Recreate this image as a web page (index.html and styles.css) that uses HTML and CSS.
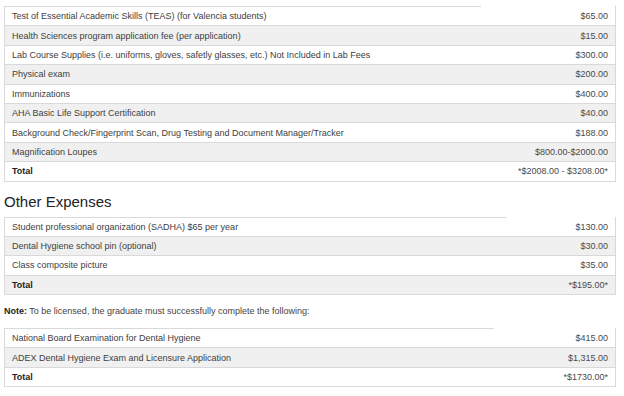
FILE: index.html
```html
<!DOCTYPE html>
<html>
<head>
<meta charset="utf-8">
<link rel="stylesheet" href="styles.css">
</head>
<body>
<div class="page">
  <div class="tbl t1">
    <div class="row first"><span class="desc">Test of Essential Academic Skills (TEAS) (for Valencia students)</span><span class="amt">$65.00</span></div>
    <div class="row"><span class="desc">Health Sciences program application fee (per application)</span><span class="amt">$15.00</span></div>
    <div class="row"><span class="desc">Lab Course Supplies (i.e. uniforms, gloves, safetly glasses, etc.) Not Included in Lab Fees</span><span class="amt">$300.00</span></div>
    <div class="row"><span class="desc">Physical exam</span><span class="amt">$200.00</span></div>
    <div class="row"><span class="desc">Immunizations</span><span class="amt">$400.00</span></div>
    <div class="row"><span class="desc">AHA Basic Life Support Certification</span><span class="amt">$40.00</span></div>
    <div class="row"><span class="desc">Background Check/Fingerprint Scan, Drug Testing and Document Manager/Tracker</span><span class="amt">$188.00</span></div>
    <div class="row"><span class="desc">Magnification Loupes</span><span class="amt">$800.00-$2000.00</span></div>
    <div class="row total"><span class="desc">Total</span><span class="amt">*$2008.00 - $3208.00*</span></div>
  </div>

  <h2 class="heading">Other Expenses</h2>

  <div class="tbl t2">
    <div class="row first"><span class="desc">Student professional organization (SADHA) $65 per year</span><span class="amt">$130.00</span></div>
    <div class="row"><span class="desc">Dental Hygiene school pin (optional)</span><span class="amt">$30.00</span></div>
    <div class="row"><span class="desc">Class composite picture</span><span class="amt">$35.00</span></div>
    <div class="row total"><span class="desc">Total</span><span class="amt">*$195.00*</span></div>
  </div>

  <p class="note"><b>Note:</b> To be licensed, the graduate must successfully complete the following:</p>

  <div class="tbl t3">
    <div class="row first"><span class="desc">National Board Examination for Dental Hygiene</span><span class="amt">$415.00</span></div>
    <div class="row"><span class="desc">ADEX Dental Hygiene Exam and Licensure Application</span><span class="amt">$1,315.00</span></div>
    <div class="row total"><span class="desc">Total</span><span class="amt">*$1730.00*</span></div>
  </div>
</div>
</body>
</html>
```
FILE: styles.css
```css
html, body {
  margin: 0;
  padding: 0;
  background: #ffffff;
}

.page {
  width: 612px;
  margin-left: 4px;
  padding-top: 6px;
  font-family: "Liberation Sans", Arial, sans-serif;
  font-size: 9px;
  color: #404040;
}

.tbl {
  position: relative;
  border-left: 1px solid #d9d9d9;
  border-right: 1px solid #d9d9d9;
  border-bottom: 1px solid #d9d9d9;
}

.tbl::before {
  content: "";
  position: absolute;
  left: -1px;
  top: 0;
  height: 1px;
  background: #d9d9d9;
}

.t1::before { width: 477px; }
.t2::before { width: 502px; }
.t3::before { width: 490px; }

.row {
  display: flex;
  justify-content: space-between;
  align-items: center;
  height: 19.4px;
  box-sizing: border-box;
  padding: 0 7px 0 7px;
  border-top: 1px solid #d9d9d9;
}

.row.first {
  border-top: 1px solid transparent;
}

.row:nth-child(even) {
  background: #f0f0f0;
}

.amt {
  color: #4a4a4a;
}

.total .desc {
  font-weight: bold;
  color: #222;
}

.heading {
  margin: 9px 0 0 0;
  height: 26px;
  font-family: "Liberation Sans", Arial, sans-serif;
  font-weight: normal;
  font-size: 15px;
  line-height: 22px;
  color: #222;
}

.note {
  margin: 0;
  height: 33px;
  line-height: 33px;
  color: #444;
}

.note b {
  color: #222;
}
```
